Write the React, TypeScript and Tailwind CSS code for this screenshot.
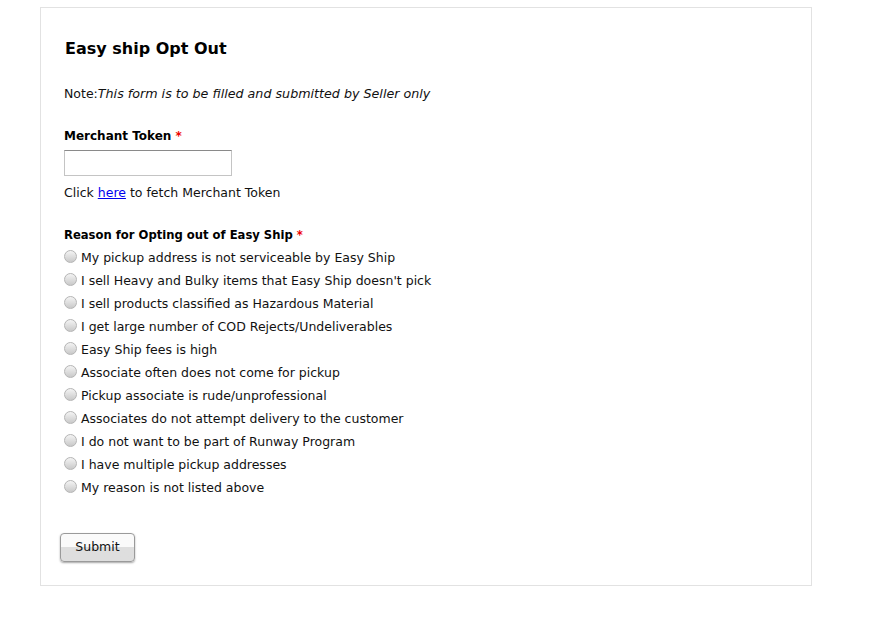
import React, { useState } from 'react';

const reasons = [
  'My pickup address is not serviceable by Easy Ship',
  "I sell Heavy and Bulky items that Easy Ship doesn't pick",
  'I sell products classified as Hazardous Material',
  'I get large number of COD Rejects/Undeliverables',
  'Easy Ship fees is high',
  'Associate often does not come for pickup',
  'Pickup associate is rude/unprofessional',
  'Associates do not attempt delivery to the customer',
  'I do not want to be part of Runway Program',
  'I have multiple pickup addresses',
  'My reason is not listed above',
];

function Radio({ checked }: { checked: boolean }) {
  return (
    <span className="flex h-[13px] w-[13px] shrink-0 items-center justify-center rounded-full border border-[#b5b5b5] bg-gradient-to-b from-[#f4f4f4] to-[#c9c9c9]">
      {checked && <span className="h-[5px] w-[5px] rounded-full bg-[#333]" />}
    </span>
  );
}

export default function App() {
  const [token, setToken] = useState('');
  const [reason, setReason] = useState<number | null>(null);

  return (
    <div className="min-h-[628px] bg-white pl-[40px] pt-[7px] text-[12.5px] text-[#111] [font-family:'DejaVu_Sans',Verdana,sans-serif]">
      <div className="flex h-[579px] w-[772px] flex-col border border-[#e2e2e2] pl-[23px] pt-[30px]">
        <h1 className="ml-[1px] text-[16px] font-bold leading-[22px] text-black">Easy ship Opt Out</h1>

        <p className="mt-[25px] leading-[18px]">
          Note:<span className="text-[12.7px] italic">This form is to be filled and submitted by Seller only</span>
        </p>

        <label className="mt-[24px] text-[12px] font-bold leading-[18px] text-black">
          Merchant Token <span className="text-[#e00]">*</span>
        </label>
        <input
          value={token}
          onChange={(e) => setToken(e.target.value)}
          className="mt-[5px] h-[26px] w-[168px] border border-[#c4c4c4] border-t-[#8a8a8a] px-1 outline-none"
        />
        <p className="mt-[8px] leading-[18px]">
          Click <a href="#" className="text-[#0000ee] underline">here</a> to fetch Merchant Token
        </p>

        <label className="mt-[24px] text-[11.6px] font-bold leading-[18px] text-black">
          Reason for Opting out of Easy Ship <span className="text-[#e00]">*</span>
        </label>
        <div className="mt-[4px] flex flex-col">
          {reasons.map((r, i) => (
            <label
              key={r}
              className="flex h-[23px] cursor-pointer items-start gap-[4px] pt-[1px] leading-[18px]"
              onClick={() => setReason(i)}
            >
              <span className="pt-[1px]">
                <Radio checked={reason === i} />
              </span>
              <span>{r}</span>
            </label>
          ))}
        </div>

        <button className="-ml-[4px] mt-[32px] h-[29px] w-[75px] rounded-[4px] border border-[#9a9a9a] bg-gradient-to-b from-[#fafafa] from-50% to-[#dedede] to-50% text-[12.5px] text-[#111] shadow-[0_1px_2px_rgba(0,0,0,0.35)]">
          Submit
        </button>
      </div>
    </div>
  );
}
